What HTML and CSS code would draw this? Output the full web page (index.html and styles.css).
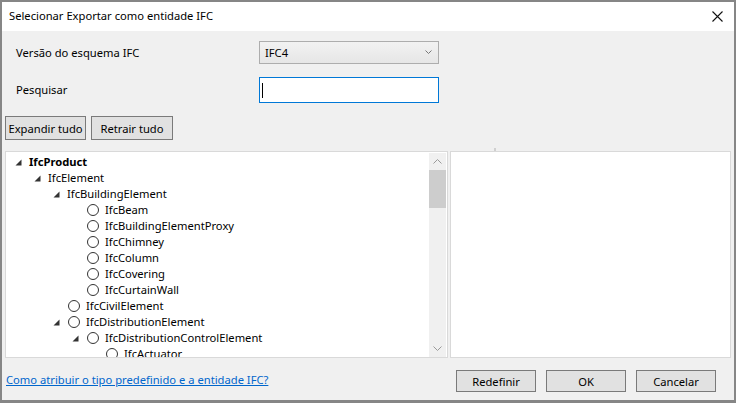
FILE: index.html
```html
<!DOCTYPE html>
<html lang="pt">
<head>
<meta charset="utf-8">
<title>Selecionar Exportar como entidade IFC</title>
<link rel="stylesheet" href="styles.css">
</head>
<body>
<div class="window">
  <div class="titlebar">
    <span class="title">Selecionar Exportar como entidade IFC</span>
    <svg class="close" width="11" height="11" viewBox="0 0 11 11"><path d="M0.5 0.5 L10.5 10.5 M10.5 0.5 L0.5 10.5" stroke="#111" stroke-width="1.1" fill="none"/></svg>
  </div>
  <div class="content">
    <div class="form">
      <label class="lbl">Versão do esquema IFC</label>
      <div class="combo"><span>IFC4</span>
        <svg class="chev" width="7" height="4" viewBox="0 0 7 4"><path d="M0.5 0.5 L3.5 3.5 L6.5 0.5" stroke="#777" stroke-width="1" fill="none"/></svg>
      </div>
      <label class="lbl">Pesquisar</label>
      <div class="textbox"><span class="caret"></span></div>
    </div>
    <div class="toolbar">
      <button class="btn btn-exp">Expandir tudo</button>
      <button class="btn btn-ret">Retrair tudo</button>
    </div>
    <div class="panels">
      <div class="treepanel">
        <div class="tree">
          <div class="row l0"><span class="exp"><svg width="7" height="7" viewBox="0 0 7 7"><polygon points="6.5,0.5 6.5,6.5 0.5,6.5" fill="#333"/></svg></span><span class="txt bold">IfcProduct</span></div>
          <div class="row l1"><span class="exp"><svg width="7" height="7" viewBox="0 0 7 7"><polygon points="6.5,0.5 6.5,6.5 0.5,6.5" fill="#333"/></svg></span><span class="txt">IfcElement</span></div>
          <div class="row l2"><span class="exp"><svg width="7" height="7" viewBox="0 0 7 7"><polygon points="6.5,0.5 6.5,6.5 0.5,6.5" fill="#333"/></svg></span><span class="txt">IfcBuildingElement</span></div>
          <div class="row l3"><span class="exp"></span><span class="radio"></span><span class="txt">IfcBeam</span></div>
          <div class="row l3"><span class="exp"></span><span class="radio"></span><span class="txt">IfcBuildingElementProxy</span></div>
          <div class="row l3"><span class="exp"></span><span class="radio"></span><span class="txt">IfcChimney</span></div>
          <div class="row l3"><span class="exp"></span><span class="radio"></span><span class="txt">IfcColumn</span></div>
          <div class="row l3"><span class="exp"></span><span class="radio"></span><span class="txt">IfcCovering</span></div>
          <div class="row l3"><span class="exp"></span><span class="radio"></span><span class="txt">IfcCurtainWall</span></div>
          <div class="row l2"><span class="exp"></span><span class="radio"></span><span class="txt">IfcCivilElement</span></div>
          <div class="row l2"><span class="exp"><svg width="7" height="7" viewBox="0 0 7 7"><polygon points="6.5,0.5 6.5,6.5 0.5,6.5" fill="#333"/></svg></span><span class="radio"></span><span class="txt">IfcDistributionElement</span></div>
          <div class="row l3"><span class="exp"><svg width="7" height="7" viewBox="0 0 7 7"><polygon points="6.5,0.5 6.5,6.5 0.5,6.5" fill="#333"/></svg></span><span class="radio"></span><span class="txt">IfcDistributionControlElement</span></div>
          <div class="row l4"><span class="exp"></span><span class="radio"></span><span class="txt">IfcActuator</span></div>
        </div>
        <div class="scrollbar">
          <div class="arrow"><svg width="9" height="5" viewBox="0 0 9 5"><path d="M0.5 4.5 L4.5 0.5 L8.5 4.5" stroke="#9a9a9a" stroke-width="1" fill="none"/></svg></div>
          <div class="track"><div class="thumb"></div></div>
          <div class="arrow"><svg width="9" height="5" viewBox="0 0 9 5"><path d="M0.5 0.5 L4.5 4.5 L8.5 0.5" stroke="#9a9a9a" stroke-width="1" fill="none"/></svg></div>
        </div>
      </div>
      <div class="detailpanel"><span class="grip"></span></div>
    </div>
    <div class="footer">
      <a class="link" href="#">Como atribuir o tipo predefinido e a entidade IFC?</a>
      <div class="actions">
        <button class="btn act">Redefinir</button>
        <button class="btn act">OK</button>
        <button class="btn act">Cancelar</button>
      </div>
    </div>
  </div>
</div>
</body>
</html>
```
FILE: styles.css
```css
* { box-sizing: border-box; }
html, body { margin: 0; padding: 0; }
body {
  width: 736px;
  height: 403px;
  overflow: hidden;
  font-family: "Noto Sans", "Open Sans", sans-serif;
  font-size: 11.2px;
  color: #000;
}
.window {
  width: 736px;
  height: 403px;
  border-style: solid;
  border-color: #868686;
  border-width: 2px 2px 3px 2px;
  background: #f0f0f0;
  display: flex;
  flex-direction: column;
}
.titlebar {
  height: 29px;
  background: #fff;
  display: flex;
  align-items: center;
  justify-content: space-between;
  padding: 0 8px 0 7px;
}
.title { font-size: 11.2px; position: relative; top: -1px; }
.close { margin-right: 3px; }
.content {
  flex: 1;
  display: flex;
  flex-direction: column;
  padding: 10px 0 0 3px;
}
.form {
  display: grid;
  grid-template-columns: 243px 180px;
  grid-template-rows: 23px 26px;
  row-gap: 13px;
  align-items: center;
  padding-left: 11px;
}
.lbl { line-height: 16px; }
.combo {
  height: 23px;
  border: 1px solid #adadad;
  background: linear-gradient(#f2f2f2, #e6e6e6);
  display: flex;
  align-items: center;
  justify-content: space-between;
  padding: 0 6px 0 5px;
}
.chev { margin-top: -1px; }
.textbox {
  height: 26px;
  border: 1px solid #0078d7;
  background: #fff;
  display: flex;
  align-items: center;
  padding-left: 2px;
}
.caret { width: 1px; height: 15px; background: #000; }
.toolbar {
  display: flex;
  gap: 5px;
  margin-top: 13px;
}
.btn {
  font-family: "Noto Sans", "Open Sans", sans-serif;
  font-size: 11.2px;
  color: #000;
  background: #e1e1e1;
  border: 1px solid #7a7a7a;
  padding: 0;
  margin: 0;
  height: 24px;
}
.btn-exp { width: 81px; }
.btn-ret { width: 82px; }
.panels {
  display: flex;
  gap: 2px;
  margin-top: 11px;
  height: 207px;
  padding-right: 3px;
}
.treepanel {
  width: 443px;
  background: #fff;
  border: 1px solid #d9d9d9;
  display: flex;
  overflow: hidden;
}
.tree {
  flex: 1;
  overflow: hidden;
  padding-top: 2px;
}
.row {
  height: 16px;
  display: flex;
  align-items: center;
  white-space: nowrap;
}
.l0 { padding-left: 9px; }
.l1 { padding-left: 28px; }
.l2 { padding-left: 47px; }
.l3 { padding-left: 66px; }
.l4 { padding-left: 85px; }
.exp {
  width: 14px;
  height: 16px;
  flex: none;
  display: flex;
  align-items: center;
}
.exp svg { margin-top: 1px; }
.radio {
  width: 12px;
  height: 12px;
  border: 1px solid #333;
  border-radius: 50%;
  background: #fff;
  flex: none;
  margin: 0 6px 0 1px;
}
.txt { line-height: 16px; }
.bold { font-weight: bold; }
.scrollbar {
  width: 17px;
  flex: none;
  margin: 1px 1px 0 0;
  background: #f0f0f0;
  display: flex;
  flex-direction: column;
}
.arrow {
  height: 17px;
  display: flex;
  align-items: center;
  justify-content: center;
}
.track { flex: 1; }
.thumb { height: 38px; background: #cdcdcd; }
.detailpanel {
  flex: 1;
  background: #fff;
  border: 1px solid #d9d9d9;
  position: relative;
}
.grip {
  position: absolute;
  left: 43px;
  top: -4px;
  width: 2px;
  height: 3px;
  background: #d0d0d0;
}
.footer {
  display: flex;
  align-items: center;
  justify-content: space-between;
  margin-top: 12px;
  padding: 0 18px 0 1px;
  height: 22px;
}
.link {
  color: #0066cc;
  text-decoration: underline;
  position: relative;
  top: -2px;
}
.actions { display: flex; gap: 10px; }
.act { width: 80px; height: 22px; }
```
